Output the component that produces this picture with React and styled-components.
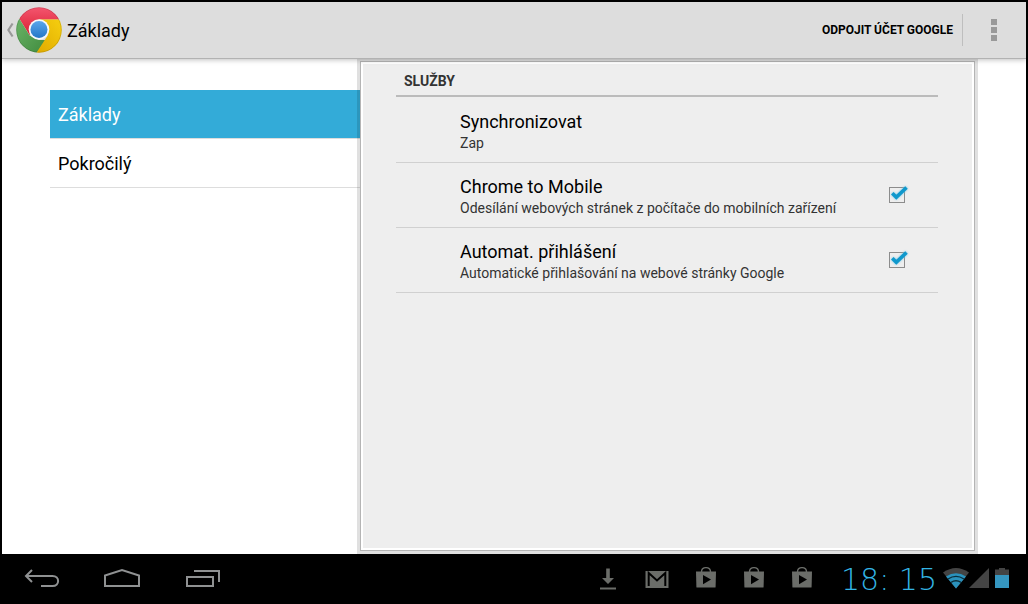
import {useState} from 'react';
import styled, {createGlobalStyle} from 'styled-components';

const headers = ["Základy", "Pokročilý"];

const services = [
  {id: "sync", title: "Synchronizovat", summary: "Zap"},
  {id: "mobile", title: "Chrome to Mobile", summary: "Odesílání webových stránek z počítače do mobilních zařízení", toggle: true},
  {id: "login", title: "Automat. přihlášení", summary: "Automatické přihlašování na webové stránky Google", toggle: true}
];

const ChromeLogo = () => (
  <svg width="46" height="46" viewBox="0 0 46 46" aria-hidden="true">
    <defs>
      <clipPath id="disc"><circle cx="23" cy="23" r="22.8" /></clipPath>
      <linearGradient id="red" x1="0" y1="0" x2="0" y2="1">
        <stop offset="0" stopColor="#f4566f" />
        <stop offset="1" stopColor="#d91f32" />
      </linearGradient>
      <linearGradient id="green" x1="0" y1="0" x2="1" y2="1">
        <stop offset="0" stopColor="#6db66a" />
        <stop offset="1" stopColor="#3f8a3d" />
      </linearGradient>
      <linearGradient id="yellow" x1="1" y1="0" x2="0" y2="1">
        <stop offset="0" stopColor="#f6cf10" />
        <stop offset="1" stopColor="#dfa900" />
      </linearGradient>
      <linearGradient id="blue" x1="0" y1="0" x2="0" y2="1">
        <stop offset="0" stopColor="#5ba6ea" />
        <stop offset="1" stopColor="#2477c8" />
      </linearGradient>
    </defs>
    <g clipPath="url(#disc)">
      <path d="M0 0H46V12.5H23L13.5 28L3.5 12Z" fill="url(#red)" />
      <path d="M3.5 12L13.6 28.5L23 33H31L20.5 46H0V8Z" fill="url(#green)" />
      <path d="M23 12.5H46V46H20.3L32 28Z" fill="url(#yellow)" />
      <circle cx="23" cy="23" r="22.4" fill="none" stroke="#000" strokeOpacity=".15" />
    </g>
    <circle cx="23" cy="22.5" r="10.3" fill="#f6f8fa" />
    <circle cx="23" cy="22.5" r="8.5" fill="url(#blue)" />
  </svg>
)

const StoreBag = () => (
  <svg width="22" height="24" viewBox="0 0 22 24" role="img" aria-label="Obchod Play">
    <path d="M6.5 5C6.5 -.8 15.5 -.8 15.5 5" fill="none" stroke="#6b6d69" strokeWidth="1.4" />
    <path d="M1 4.6H21L20.6 20Q20.5 20.5 20 20.5H2Q1.5 20.5 1.4 20Z" fill="#6b6d69" />
    <path d="M8 8V17.2L16 12.6Z" fill="#000" />
  </svg>
)

const App = () => {
  const [selected, changeSelected] = useState("Základy");
  const [checked, changeChecked] = useState({mobile: true, login: true});

  const toggleService = (e) => {
    const {id} = e.target;
    changeChecked(prev => ({...prev, [id]: !prev[id]}));
  }

  const headerItems = headers.map((name) => (
    <HeaderItem key={name} $active={name === selected} onClick={() => changeSelected(name)}>
      {name}
    </HeaderItem>
  ));

  const serviceRows = services.map(({id, title, summary, toggle}) => (
    <ServiceRow key={id} as={toggle ? "label" : "div"} htmlFor={toggle ? id : undefined}>
      <ServiceText>
        <ServiceTitle>{title}</ServiceTitle>
        <ServiceSummary>{summary}</ServiceSummary>
      </ServiceText>
      {toggle &&
        <CheckWrapper>
          <CheckBox id={id} type="checkbox" checked={checked[id]} onChange={toggleService} />
          {checked[id] &&
            <Tick width="24" height="24" viewBox="0 0 24 24" aria-hidden="true">
              <path d="M7.3 10.3L11.3 14.3L21.5 4.5" />
            </Tick>
          }
        </CheckWrapper>
      }
    </ServiceRow>
  ));

  return (
    <Screen>
      <GlobalStyle />
      <ActionBar>
        <UpButton aria-label="Zpět na přehled">
          <svg width="8" height="16" viewBox="0 0 8 16" aria-hidden="true">
            <path d="M6.6 1.5L2.4 8L6.6 14.5" fill="none" stroke="#999" strokeWidth="2.2" />
          </svg>
          <ChromeLogo />
        </UpButton>
        <PageTitle>Základy</PageTitle>
        <AccountButton>ODPOJIT ÚČET GOOGLE</AccountButton>
        <OverflowButton aria-label="Další možnosti">
          <svg width="6" height="22" viewBox="0 0 6 22" fill="#999" aria-hidden="true">
            <path d="M0 0H6V6H0ZM0 8H6V14H0ZM0 16H6V22H0Z" />
          </svg>
        </OverflowButton>
      </ActionBar>
      <Content>
        <HeaderList>{headerItems}</HeaderList>
        <Panel>
          <Category>SLUŽBY</Category>
          {serviceRows}
        </Panel>
      </Content>
      <SystemBar>
        <NavKeys>
          <NavKey aria-label="Zpět">
            <svg width="38" height="22" viewBox="0 0 38 22" aria-hidden="true">
              <path d="M3 8H29.5C37 8 37 18 29.5 18H18M9 2L3 8L9 14" />
            </svg>
          </NavKey>
          <NavKey aria-label="Domů">
            <svg width="38" height="22" viewBox="0 0 38 22" aria-hidden="true">
              <path d="M1 18V7.5L18 2L35 7.5V18Z" />
            </svg>
          </NavKey>
          <NavKey aria-label="Poslední aplikace">
            <svg width="38" height="22" viewBox="0 0 38 22" aria-hidden="true">
              <path d="M2 9H28V18H2ZM9 3H34V14" />
            </svg>
          </NavKey>
        </NavKeys>
        <Notifications>
          <svg width="22" height="22" viewBox="0 0 22 22" fill="#6b6d69" role="img" aria-label="Staženo">
            <path d="M9.2 .5H12.8V10H17L11 16L5 10H9.2ZM3 19.5H19V21.5H3Z" />
          </svg>
          <svg width="24" height="22" viewBox="0 0 24 22" role="img" aria-label="Gmail">
            <path d="M.5 3H23.5V20H.5Z" fill="#6b6d69" />
            <path d="M3.7 18V5L12 12.5L20.3 5V18" fill="none" stroke="#000" strokeWidth="2" />
          </svg>
          <StoreBag />
          <StoreBag />
          <StoreBag />
        </Notifications>
        <Clock>18: 15</Clock>
        <StatusIcons>
          <svg width="26" height="22" viewBox="0 0 26 22" role="img" aria-label="Wi-Fi">
            <path d="M13 20.5L0 4.5Q13 -4.5 26 4.5Z" fill="#444" />
            <path d="M13 20.5L3 8.5Q13 2 23 8.5Z" fill="#2a92bd" />
            <path d="M5 11Q13 5.8 21 11M8 14.3Q13 11.3 18 14.3" fill="none" stroke="#0b2e3b" strokeWidth="1.4" />
          </svg>
          <svg width="20" height="22" viewBox="0 0 20 22" role="img" aria-label="Signál">
            <path d="M20 0V20H0Z" fill="#444" />
          </svg>
          <Battery width="14" height="22" viewBox="0 0 14 22" role="img" aria-label="Baterie">
            <path d="M0 1.5H4V0H10V1.5H14V8H0Z" fill="#444" />
            <path d="M0 7H14V20H0Z" fill="#3596c0" />
          </Battery>
        </StatusIcons>
      </SystemBar>
    </Screen>
  )
}

export default App

const GlobalStyle = createGlobalStyle`
  * {
    box-sizing: border-box;
  }
  body {
    margin: 0;
    background-color: black;
  }
  button {
    border: none;
    padding: 0;
    background: none;
    color: inherit;
    font-family: inherit;
    cursor: pointer;
  }
  svg {
    display: block;
    flex: none;
  }
`

const Screen = styled.div`
  display: flex;
  flex-direction: column;
  min-height: 100vh;
  padding: 2px 2px 0;
  background-color: black;
  color: black;
  font-family: Roboto, sans-serif;
  font-size: 18px;
`

const ActionBar = styled.header`
  display: flex;
  align-items: center;
  height: 57px;
  background-color: #ddd;
  border-bottom: 1px solid #b2b2b2;
  box-shadow: 0 1px 5px rgba(0, 0, 0, 0.25);
  z-index: 1;
`

const UpButton = styled.button`
  display: flex;
  align-items: center;
  gap: 2px;
  padding-left: 4px;
`

const PageTitle = styled.h1`
  flex: 1;
  margin: 0 0 0 5px;
  font-size: 18px;
  font-weight: 400;
`

const AccountButton = styled.button`
  height: 32px;
  padding: 0 9px;
  border-right: 1px solid #bebebe;
  font-size: 12px;
  font-weight: 700;
`

const OverflowButton = styled.button`
  display: flex;
  align-items: center;
  justify-content: center;
  width: 63px;
  height: 56px;
  padding-right: 1px;
`

const Content = styled.div`
  flex: 1;
  display: grid;
  grid-template-columns: 310px 1fr;
  padding: 2px 51px 3px 48px;
  background-color: white;
`

const HeaderList = styled.nav`
  padding-top: 29px;
`

const HeaderItem = styled.button`
  display: block;
  width: 100%;
  height: 49px;
  padding: 0 8px;
  border-bottom: 1px solid #ddd;
  background-color: ${props => props.$active ? "#33abd8" : "transparent"};
  background-clip: padding-box;
  color: ${props => props.$active ? "white" : "black"};
  font-size: 18px;
  text-align: left;
`

const Panel = styled.main`
  padding: 0 36px 0 35px;
  border: 1px solid #b4b4b4;
  background-color: #eee;
  box-shadow: 0 0 0 3px rgba(0, 0, 0, 0.12), inset 0 0 0 2px white;
`

const Category = styled.h2`
  margin: 0 0 1px;
  height: 35px;
  padding: 0 8px;
  border-bottom: 2px solid #bbb;
  color: #333;
  font-size: 14px;
  font-weight: 700;
  line-height: 38px;
`

const ServiceRow = styled.div`
  display: flex;
  align-items: center;
  height: 65px;
  padding: 0 28px 0 64px;
  border-bottom: 1px solid #d0d0d0;
`

const ServiceText = styled.div`
  flex: 1;
  padding-top: 2px;
`

const ServiceTitle = styled.div`
  line-height: 24px;
`

const ServiceSummary = styled.div`
  color: #333;
  font-size: 14px;
  line-height: 18px;
`

const CheckWrapper = styled.div`
  display: grid;
  place-items: center;
  width: 24px;
  height: 24px;
  margin-right: 1px;
`

const CheckBox = styled.input`
  grid-area: 1 / 1;
  appearance: none;
  width: 16px;
  height: 16px;
  margin: 0;
  border: 1px solid #8c8c8c;
`

const Tick = styled.svg`
  grid-area: 1 / 1;
  pointer-events: none;
  fill: none;
  stroke: #0f98cc;
  stroke-width: 3.6;
  filter: drop-shadow(0 0 1px #6fc4e6);
`

const SystemBar = styled.footer`
  display: flex;
  align-items: center;
  height: 50px;
  padding: 0 17px 0 21px;
`

const NavKeys = styled.div`
  display: flex;
  flex: 1;
  gap: 43px;
`

const NavKey = styled.button`
  svg {
    fill: none;
    stroke: #8f9192;
    stroke-width: 2;
  }
`

const Notifications = styled.div`
  display: flex;
  align-items: center;
  gap: 26px;
`

const Clock = styled.time`
  margin: 0 6px 0 28px;
  color: #33b5e5;
  font-family: "DejaVu Sans Light", "DejaVu Sans", sans-serif;
  font-size: 30px;
  font-weight: 200;
  white-space: pre;
`

const StatusIcons = styled.div`
  display: flex;
  align-items: center;
`

const Battery = styled.svg`
  margin-left: 6px;
`
